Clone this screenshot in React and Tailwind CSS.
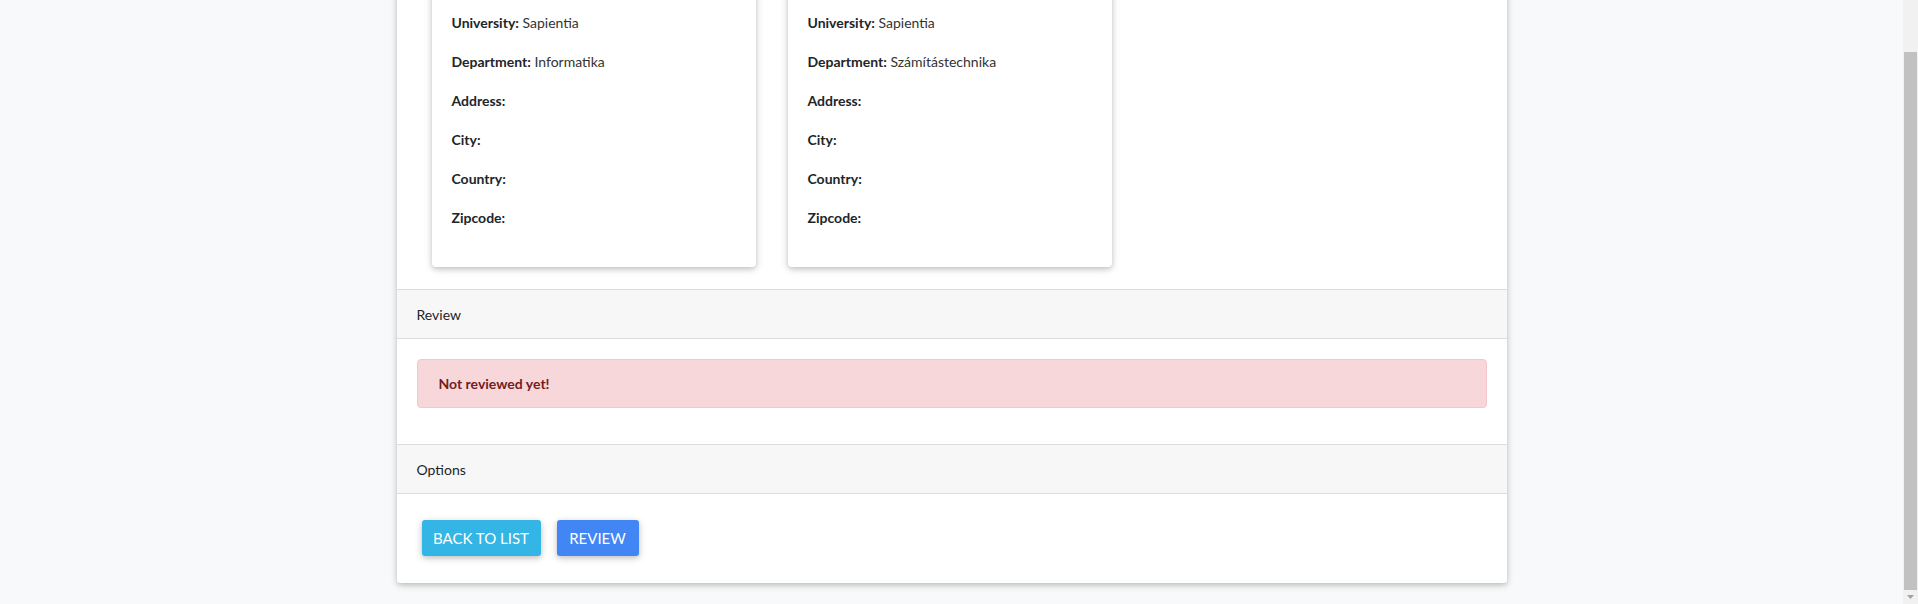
const font = { fontFamily: "Lato, 'Open Sans', sans-serif" };

const cards = [
  { university: "Sapientia", department: "Informatika" },
  { university: "Sapientia", department: "Számítástechnika" },
];

function Row({ label, value }) {
  return (
    <p className="mb-4 text-[14px] leading-[23px] text-[#212529]">
      <span className="font-bold">{label}:</span>
      {value ? <span className="text-[#333]"> {value}</span> : null}
    </p>
  );
}

function InfoCard({ university, department }) {
  return (
    <div className="w-[324px] bg-white rounded-[4px] px-5 pt-5 pb-[22px] shadow-[0_2px_5px_0_rgba(0,0,0,0.16),0_2px_10px_0_rgba(0,0,0,0.12)]">
      <Row label="Name" value="" />
      <Row label="Email" value="" />
      <Row label="University" value={university} />
      <Row label="Department" value={department} />
      <Row label="Address" />
      <Row label="City" />
      <Row label="Country" />
      <Row label="Zipcode" />
    </div>
  );
}

function SectionHeader({ children }) {
  return (
    <div className="h-[50px] flex items-center px-5 bg-[#f7f7f7] border-y border-[#dcdcdc] text-[14px] text-[#212529]">
      {children}
    </div>
  );
}

export default function App() {
  return (
    <div className="flex h-[604px] overflow-hidden bg-[#f8f9fa]" style={font}>
      <div className="flex-1 flex flex-col justify-end pb-[21px] overflow-hidden">
        <div className="w-[1110px] mx-auto bg-white rounded-b-[3px] shadow-[0_2px_5px_0_rgba(0,0,0,0.16),0_2px_10px_0_rgba(0,0,0,0.12)]">
          <div className="flex gap-8 pl-[35px] pb-[22px]">
            {cards.map((c, i) => (
              <InfoCard key={i} {...c} />
            ))}
          </div>

          <SectionHeader>Review</SectionHeader>
          <div className="px-5 pt-5 pb-[36px]">
            <div className="h-[49px] flex items-center px-[21px] bg-[#f8d7da] border border-[#f5c6cb] rounded-[4px] text-[14px] font-bold text-[#721c24]">
              Not reviewed yet!
            </div>
          </div>

          <SectionHeader>Options</SectionHeader>
          <div className="flex gap-4 px-[25px] pt-[26px] pb-[27px]">
            <button className="h-[36px] w-[119px] rounded-[3px] bg-[#33b5e5] text-white text-[15px] uppercase shadow-[0_2px_5px_0_rgba(0,0,0,0.16),0_2px_10px_0_rgba(0,0,0,0.12)]">
              Back to list
            </button>
            <button className="h-[36px] w-[82px] rounded-[3px] bg-[#4285f4] text-white text-[15px] uppercase shadow-[0_2px_5px_0_rgba(0,0,0,0.16),0_2px_10px_0_rgba(0,0,0,0.12)]">
              Review
            </button>
          </div>
        </div>
      </div>

      <div className="w-[15px] h-[604px] bg-[#f1f1f1] flex flex-col pt-[52px]">
        <div className="mx-auto w-[13px] flex-1 bg-[#c1c1c1]" />
        <div className="h-[14px] flex items-center justify-center">
          <svg width="7" height="4" viewBox="0 0 7 4">
            <path d="M0 0h7L3.5 4z" fill="#a3a3a3" />
          </svg>
        </div>
      </div>
    </div>
  );
}
